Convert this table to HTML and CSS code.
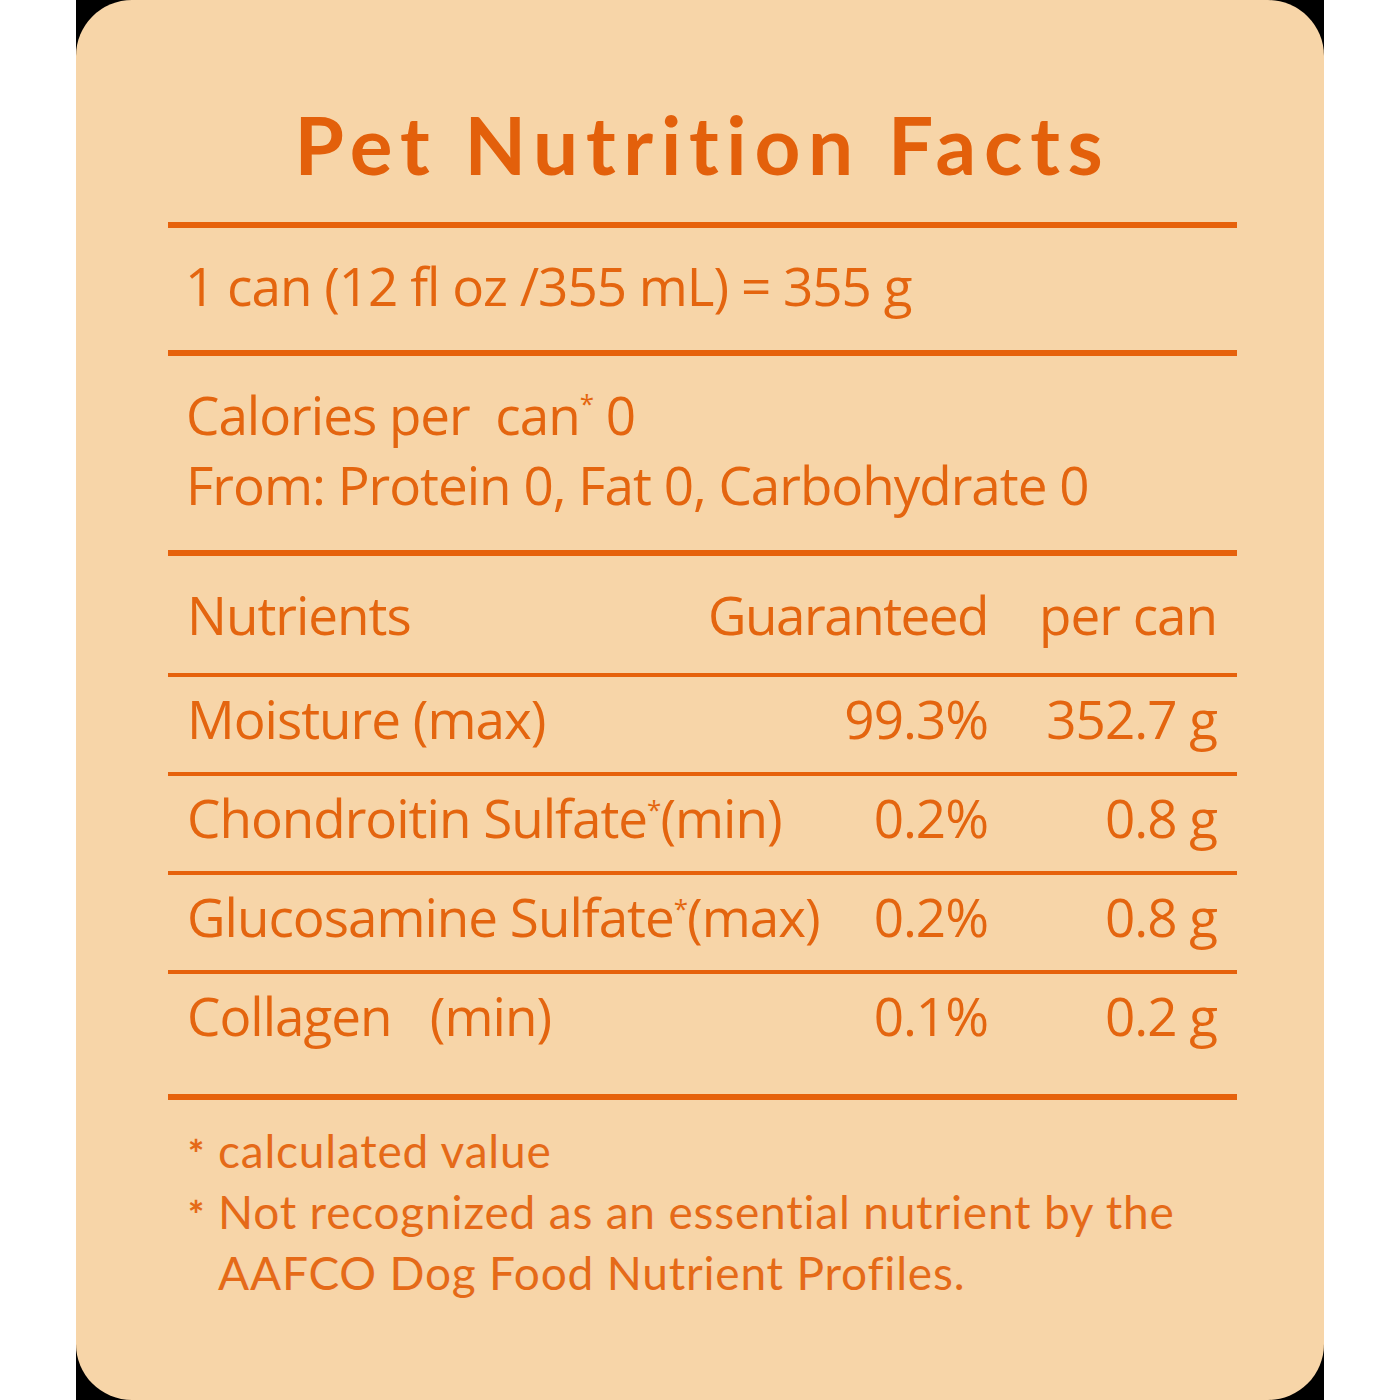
FILE: index.html
```
<!DOCTYPE html>
<html lang="en">
<head>
<meta charset="utf-8">
<title>Pet Nutrition Facts</title>
<link rel="stylesheet" href="styles.css">
</head>
<body>
<div class="frame">
  <div class="card">
    <div class="inner">
      <h1 class="title">Pet Nutrition Facts</h1>
      <div class="rule thick"></div>
      <div class="serving">1 can (12 fl oz /355 mL) = 355 g</div>
      <div class="rule thick"></div>
      <div class="calories">
        <div>Calories per&nbsp; can<sup class="ast">*</sup> 0</div>
        <div>From: Protein 0, Fat 0, Carbohydrate 0</div>
      </div>
      <div class="rule thick"></div>
      <div class="row head">
        <span class="name">Nutrients</span>
        <span class="val">Guaranteed</span>
        <span class="val">per can</span>
      </div>
      <div class="rule thin"></div>
      <div class="row">
        <span class="name">Moisture (max)</span>
        <span class="val">99.3%</span>
        <span class="val">352.7 g</span>
      </div>
      <div class="rule thin"></div>
      <div class="row">
        <span class="name">Chondroitin Sulfate<sup class="ast">*</sup>(min)</span>
        <span class="val">0.2%</span>
        <span class="val">0.8 g</span>
      </div>
      <div class="rule thin"></div>
      <div class="row">
        <span class="name">Glucosamine Sulfate<sup class="ast">*</sup>(max)</span>
        <span class="val">0.2%</span>
        <span class="val">0.8 g</span>
      </div>
      <div class="rule thin"></div>
      <div class="row last">
        <span class="name">Collagen&nbsp;&nbsp; (min)</span>
        <span class="val">0.1%</span>
        <span class="val">0.2 g</span>
      </div>
      <div class="rule thick"></div>
      <div class="notes">
        <div class="note"><span class="mark">*</span><span class="ntext">calculated value</span></div>
        <div class="note"><span class="mark">*</span><span class="ntext">Not recognized as an essential nutrient by the AAFCO Dog Food Nutrient Profiles.</span></div>
      </div>
    </div>
  </div>
</div>
</body>
</html>
```
FILE: styles.css
```
html, body {
  margin: 0;
  padding: 0;
  background: #ffffff;
}

.frame {
  width: 1248px;
  height: 1400px;
  margin-left: 76px;
  background: #000000;
}

.card {
  height: 100%;
  background: #f7d5a8;
  border-radius: 56px;
  color: #e4650f;
  font-family: "Open Sans", "DejaVu Sans Condensed", sans-serif;
  font-stretch: 90%;
  font-weight: 500;
  letter-spacing: -1px;
}

.inner {
  width: 1069px;
  margin-left: 92px;
}

.title {
  margin: 0;
  height: 222px;
  box-sizing: border-box;
  padding-top: 99px;
  text-align: center;
  font-family: Lato, "Open Sans", sans-serif;
  font-stretch: normal;
  font-weight: 700;
  font-size: 80px;
  line-height: 90px;
  letter-spacing: 7.7px;
  color: #e3600b;
}

.rule {
  background: #e6620c;
}
.rule.thick { height: 6px; }
.rule.thin { height: 4px; }

.serving {
  font-size: 53px;
  line-height: 64px;
  padding: 26px 0 32px 17px;
}

.calories {
  font-size: 53px;
  line-height: 70px;
  padding: 24px 0 30px 18px;
}

.ast {
  font-size: 26px;
  vertical-align: top;
  line-height: 1;
  position: relative;
  top: 10px;
}

.row {
  display: grid;
  grid-template-columns: minmax(0, 1fr) 300px 229px;
  font-size: 53px;
  line-height: 64px;
  padding: 10px 20px 21px 19px;
}
.row.head {
  padding-top: 27px;
  padding-bottom: 26px;
}
.row.last {
  padding-bottom: 46px;
}
.row .val {
  text-align: right;
  white-space: nowrap;
}
.row .name {
  white-space: nowrap;
}
.row.head .val:nth-child(2) {
  letter-spacing: -1.5px;
}

.notes {
  font-family: Lato, "Open Sans", sans-serif;
  font-stretch: normal;
  font-weight: 400;
  font-size: 46px;
  line-height: 61px;
  letter-spacing: 0.8px;
  padding: 20px 0 0 20px;
  color: #e56a18;
}
.note {
  display: flex;
  gap: 12px;
}
.note .mark {
  font-size: 38px;
  font-weight: 900;
  line-height: 1;
  padding-top: 14px;
  width: 18px;
  flex: none;
}
.note .ntext {
  width: 980px;
}
```
